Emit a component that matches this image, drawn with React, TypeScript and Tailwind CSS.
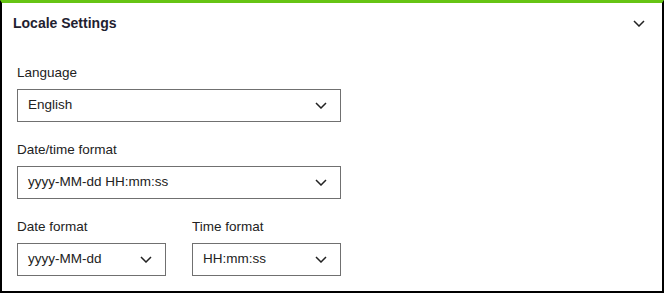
import React from "react";

function Chevron({ className }: { className?: string }) {
  return (
    <svg className={className} width="12" height="7" viewBox="0 0 12 7" fill="none">
      <path d="M1 1l5 5 5-5" stroke="#222" strokeWidth="1.5" strokeLinejoin="miter" />
    </svg>
  );
}

function Select({ value, w }: { value: string; w: string }) {
  return (
    <div className={`${w} h-[33px] border border-[#707070] flex items-center justify-between pl-[10px] pr-[13px] text-[13.5px] text-[#222]`}>
      <span>{value}</span>
      <Chevron />
    </div>
  );
}

function Field({ label, value, w }: { label: string; value: string; w: string }) {
  return (
    <div className="flex flex-col">
      <div className="h-[20px] leading-[20px] text-[13.5px] text-[#222] mb-[6px]">{label}</div>
      <Select value={value} w={w} />
    </div>
  );
}

export default function App() {
  return (
    <div
      className="w-[664px] h-[293px] bg-white border-t-[3px] border-t-[#66c414] border-x-2 border-b-2 border-x-black border-b-black flex flex-col"
      style={{ fontFamily: '"Liberation Sans", Arial, sans-serif' }}
    >
      <div className="h-[40px] flex items-center justify-between pl-[11px] pr-[17px]">
        <span className="text-[14px] font-bold text-[#1f2130]">Locale Settings</span>
        <Chevron />
      </div>
      <div className="pt-[20px] pl-[15px] flex flex-col gap-[18px]">
        <Field label="Language" value="English" w="w-[324px]" />
        <Field label="Date/time format" value="yyyy-MM-dd HH:mm:ss" w="w-[324px]" />
        <div className="flex gap-[26px]">
          <Field label="Date format" value="yyyy-MM-dd" w="w-[149px]" />
          <Field label="Time format" value="HH:mm:ss" w="w-[149px]" />
        </div>
      </div>
    </div>
  );
}
